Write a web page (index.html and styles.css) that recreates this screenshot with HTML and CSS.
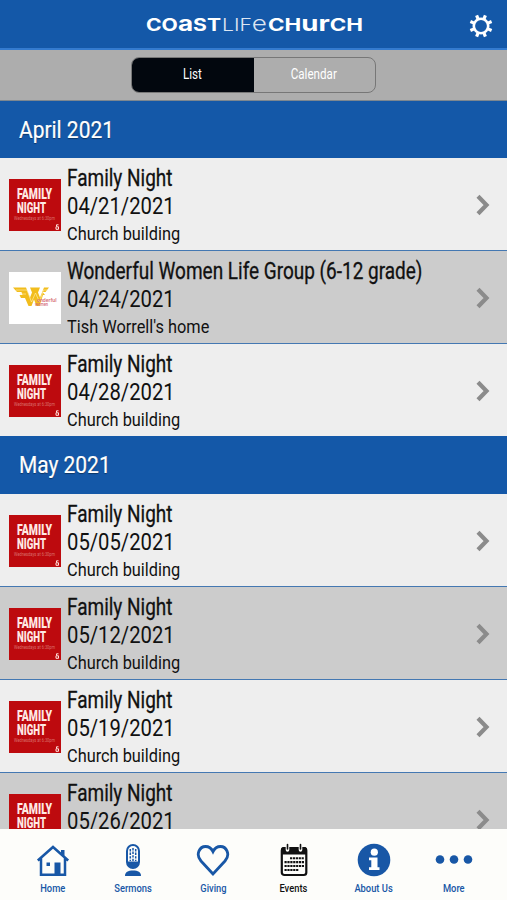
FILE: index.html
```html
<!DOCTYPE html>
<html lang="en">
<head>
  <meta charset="UTF-8" />
  <meta name="viewport" content="width=device-width, initial-scale=1.0"/>
  <title>Coast Life Church - Events</title>
  <link rel="stylesheet" href="styles.css">
</head>
<body>

  <!-- shared artwork -->
  <svg class="defs" width="0" height="0">
    <symbol id="family" viewBox="0 0 52 52">
      <rect width="52" height="52" fill="#bd0a0e"/>
      <g fill="#ffe9e4" font-family="Roboto, sans-serif" font-weight="900" font-size="14.5">
        <text x="8" y="19.5" textLength="35" lengthAdjust="spacingAndGlyphs">FAMILY</text>
        <text x="8" y="34" textLength="29" lengthAdjust="spacingAndGlyphs">NIGHT</text>
      </g>
      <text x="5" y="41" fill="#d9706c" font-family="Roboto, sans-serif" font-size="4.5" textLength="41" lengthAdjust="spacingAndGlyphs">Wednesdays at 6:30pm</text>
      <path d="M49.500 45.800h-2v2h2v2.500h-2.500v-2.500" fill="none" stroke="#ffe1dc" stroke-width="1"/>
    </symbol>
    <symbol id="wonder" viewBox="0 0 52 52">
      <rect width="52" height="52" fill="#fff"/>
      <path d="M4 15.500h13l4 10 2-5-2-5h10l-2 5 2 5 4-10h5l-3.500 4.500h-3L36 23h-2l-3.500 11h-3L25 27.500 22.500 34h-3L16 26h-4l-1.500-3h3L12.500 20H8z" fill="#f2bd1d"/>
      <path d="M7 18h11l4.500 12 4-9 4 9 4-12h4M11 22h6" fill="none" stroke="#fff3b5" stroke-width=".6"/>
      <g fill="#d56a73" font-family="Roboto, sans-serif" font-weight="500" font-size="5.500">
        <text x="28" y="30" textLength="19.500" lengthAdjust="spacingAndGlyphs">onderful</text>
        <text x="26" y="34" textLength="13" lengthAdjust="spacingAndGlyphs">women</text>
      </g>
    </symbol>
    <symbol id="chevron" viewBox="0 0 14 22">
      <path d="M2 2.200L10.500 11 2 19.800" fill="none" stroke="#8b8b8b" stroke-width="4.200"/>
    </symbol>
  </svg>

  <header class="topbar">
    <svg class="logo" width="218" height="30" viewBox="0 0 218 30">
      <g fill="#fff" font-family="Inter, sans-serif">
        <text class="bold" x="1" y="22" textLength="75" lengthAdjust="spacingAndGlyphs">CO<tspan class="low">a</tspan>ST</text>
        <text class="thin" x="77" y="22" textLength="45" lengthAdjust="spacingAndGlyphs">LIF<tspan class="low">e</tspan></text>
        <text class="bold" x="123" y="22" textLength="95" lengthAdjust="spacingAndGlyphs">CH<tspan class="low">ur</tspan>CH</text>
      </g>
    </svg>
    <svg class="gear" width="24" height="24" viewBox="-12 -12 24 24">
      <circle r="7.200" fill="none" stroke="#fff" stroke-width="2.600"/>
      <path d="M-4.400-10.600L4.400 10.600M4.400-10.600L-4.400 10.600M-10.600-4.400L10.600 4.400M-10.600 4.400L10.600-4.400" fill="none" stroke="#fff" stroke-width="3.200" stroke-dasharray="4 15 4 15"/>
    </svg>
  </header>

  <div class="switcher">
    <div class="segments">
      <button class="segment active"><span>List</span></button>
      <button class="segment"><span>Calendar</span></button>
    </div>
  </div>

  <main class="events">
    <h2 class="month"><span>April 2021</span></h2>
    <ul class="event-list">
      <li class="event">
        <svg class="thumb"><use href="#family"/></svg>
        <div class="info">
          <h3>Family Night</h3>
          <p class="date">04/21/2021</p>
          <p class="place">Church building</p>
        </div>
        <svg class="chevron"><use href="#chevron"/></svg>
      </li>
      <li class="event">
        <svg class="thumb"><use href="#wonder"/></svg>
        <div class="info">
          <h3>Wonderful Women Life Group (6-12 grade)</h3>
          <p class="date">04/24/2021</p>
          <p class="place">Tish Worrell's home</p>
        </div>
        <svg class="chevron"><use href="#chevron"/></svg>
      </li>
      <li class="event">
        <svg class="thumb"><use href="#family"/></svg>
        <div class="info">
          <h3>Family Night</h3>
          <p class="date">04/28/2021</p>
          <p class="place">Church building</p>
        </div>
        <svg class="chevron"><use href="#chevron"/></svg>
      </li>
    </ul>

    <h2 class="month"><span>May 2021</span></h2>
    <ul class="event-list">
      <li class="event">
        <svg class="thumb"><use href="#family"/></svg>
        <div class="info">
          <h3>Family Night</h3>
          <p class="date">05/05/2021</p>
          <p class="place">Church building</p>
        </div>
        <svg class="chevron"><use href="#chevron"/></svg>
      </li>
      <li class="event">
        <svg class="thumb"><use href="#family"/></svg>
        <div class="info">
          <h3>Family Night</h3>
          <p class="date">05/12/2021</p>
          <p class="place">Church building</p>
        </div>
        <svg class="chevron"><use href="#chevron"/></svg>
      </li>
      <li class="event">
        <svg class="thumb"><use href="#family"/></svg>
        <div class="info">
          <h3>Family Night</h3>
          <p class="date">05/19/2021</p>
          <p class="place">Church building</p>
        </div>
        <svg class="chevron"><use href="#chevron"/></svg>
      </li>
      <li class="event">
        <svg class="thumb"><use href="#family"/></svg>
        <div class="info">
          <h3>Family Night</h3>
          <p class="date">05/26/2021</p>
          <p class="place">Church building</p>
        </div>
        <svg class="chevron"><use href="#chevron"/></svg>
      </li>
    </ul>
  </main>

  <nav class="tabbar">
    <a class="tab">
      <svg width="34" height="34" viewBox="0 0 34 34" fill="none" stroke="currentColor">
        <path d="M1.800 17.500L17 4l15.200 13.500M5 15.500V31.800h24V15.500" stroke-width="2.500"/>
        <path d="M25 7h3.500v6L25 10z" fill="currentColor" stroke="none"/>
        <path d="M18.500 19.500h6V31h-6zM10.500 19.500h3.500V23h-3.500z" fill="currentColor" stroke="none"/>
      </svg>
      <span>Home</span>
    </a>
    <a class="tab">
      <svg width="34" height="34" viewBox="0 0 34 34" fill="currentColor">
        <path fill-rule="evenodd" d="M10 8a7 7 0 0 1 14 0v11a7 7 0 0 1-14 0zM12 8v10.500h10V8a5 5 0 0 0-10 0z"/>
        <path d="M14.300 6v12M17 5v13M19.700 6v12" stroke="currentColor" stroke-width="1.500" stroke-dasharray="2.400 1.200"/>
        <path d="M9 33c0-4 3-5.500 8-5.500s8 1.500 8 5.500z"/>
      </svg>
      <span>Sermons</span>
    </a>
    <a class="tab">
      <svg width="34" height="34" viewBox="0 0 34 34" fill="none" stroke="currentColor" stroke-width="2.800">
        <path d="M17 31L5 18C-1 11 4 3.500 9.500 3.500c3.500 0 6 2 7.500 5 1.500-3 4-5 7.500-5C30 3.500 35 11 29 18z"/>
      </svg>
      <span>Giving</span>
    </a>
    <a class="tab current">
      <svg width="34" height="34" viewBox="0 0 34 34" fill="none" stroke="currentColor">
        <rect x="4.800" y="5" width="24.500" height="27" rx="2.500" stroke-width="2.200"/>
        <path d="M4 11.500V6.500Q4 4 6.500 4h21Q30 4 30 6.500v5z" fill="currentColor" stroke="none"/>
        <path d="M10.500 2v5M23.500 2v5" stroke="#fdfdfa" stroke-width="3.600" stroke-linecap="round"/>
        <path d="M10.500 1.500v4.500M23.500 1.500v4.500" stroke-width="1.600" stroke-linecap="round"/>
        <path d="M13 15.200h14M7.500 19.100h19.500M7.500 23h19.500M7.500 27h14" stroke-width="2.100" stroke-dasharray="2.200 .700"/>
      </svg>
      <span>Events</span>
    </a>
    <a class="tab">
      <svg width="34" height="34" viewBox="0 0 34 34">
        <circle cx="17" cy="17" r="16.300" fill="currentColor"/>
        <circle cx="17.300" cy="9.200" r="3.600" fill="#fff"/>
        <path d="M12 14.500h8.500v9.800H22.500v2.700H12v-2.700h2.300v-7.100H12z" fill="#fff"/>
      </svg>
      <span>About Us</span>
    </a>
    <a class="tab">
      <svg width="38" height="34" viewBox="0 0 38 34" fill="currentColor">
        <circle cx="5" cy="16.500" r="4.300"/>
        <circle cx="19" cy="16.500" r="4.300"/>
        <circle cx="33" cy="16.500" r="4.300"/>
      </svg>
      <span>More</span>
    </a>
  </nav>

</body>
</html>
```
FILE: styles.css
```css
* {
  box-sizing: border-box;
}
body {
  font-family: Roboto, sans-serif;
  margin: 0;
  height: 900px;
  display: flex;
  flex-direction: column;
  overflow: hidden;
  background: #eee;
  color: #111;
}

h2, h3, p, ul {
  margin: 0;
  padding: 0;
  font-weight: 400;
}

.defs {
  display: none;
}

.topbar {
  flex: none;
  height: 50px;
  display: grid;
  grid-template-columns: 1fr 218px 1fr;
  align-items: center;
  padding: 0 14px;
  background: #1458a8;
  border-bottom: 2px solid #347bcf;
}

.logo {
  grid-column: 2;
  overflow: visible;
}

.logo .bold {
  font-size: 17px;
  font-weight: 700;
}

.logo .bold .low {
  font-size: 21px;
  font-weight: 700;
}

.logo .thin {
  font-size: 17px;
  font-weight: 300;
  opacity: 0.85;
}

.logo .thin .low {
  font-size: 21px;
}

.gear {
  justify-self: end;
  margin-top: 3px;
}

.switcher {
  flex: none;
  height: 51px;
  display: flex;
  justify-content: center;
  padding-top: 7px;
  background: #adadad;
  border-bottom: 1px solid #7d8790;
}

.segments {
  display: flex;
  width: 245px;
  height: 36px;
  border: 1px solid #777;
  border-radius: 8px;
  overflow: hidden;
}

.segment {
  flex: 1;
  padding: 0 0 2px;
  border: none;
  background: none;
  color: #fff;
  font: 400 14px Roboto, sans-serif;
}

.segment span {
  display: inline-block;
  transform: scaleX(0.83);
}

.segment.active {
  background: #02070e;
}

.events {
  flex: 1;
  min-height: 0;
  overflow: hidden;
}

.month {
  height: 57px;
  padding-left: 19px;
  background: #1458a8;
  color: #fff;
  font-size: 23px;
  line-height: 60px;
  text-shadow: 0 1px 1px rgba(0, 0, 0, 0.4);
}

.event-list + .month {
  height: 58px;
}

.month span {
  display: inline-block;
  transform: scaleX(0.91);
  transform-origin: left;
  -webkit-text-stroke: 0.2px #fff;
}

.event-list {
  list-style: none;
}

.event {
  display: flex;
  align-items: center;
  height: 93px;
  padding: 2px 17px 0 9px;
  background: #eee;
  border-bottom: 1px solid #4478b2;
}

.event:nth-child(even) {
  background: #ccc;
}

.event-list:first-of-type .event:last-child {
  height: 92px;
  border-bottom: none;
}

.thumb {
  flex: none;
  width: 52px;
  height: 52px;
}

.info {
  flex: 1;
  min-width: 0;
  margin-left: 6px;
  white-space: nowrap;
}

.info h3, .info p {
  transform-origin: left;
  font-size: 23px;
  line-height: 28px;
}

.info h3 {
  transform: scaleX(0.825);
  -webkit-text-stroke: 0.3px #111;
}

.info .date {
  transform: scaleX(0.88);
}

.info .place {
  font-size: 19px;
  line-height: 25px;
  transform: scaleX(0.86);
}

.chevron {
  flex: none;
  width: 14px;
  height: 22px;
}

.tabbar {
  flex: none;
  height: 71px;
  display: flex;
  padding: 0 13px;
  background: #fdfdfa;
}

.tab {
  flex: 1;
  display: flex;
  flex-direction: column;
  align-items: center;
  padding-top: 14px;
  color: #1857a6;
}

.tab span {
  margin-top: 5px;
  font-size: 11px;
  font-weight: 500;
  line-height: 14px;
  white-space: nowrap;
  transform: scaleX(0.85);
}

.tab.current {
  color: #111;
}
```
